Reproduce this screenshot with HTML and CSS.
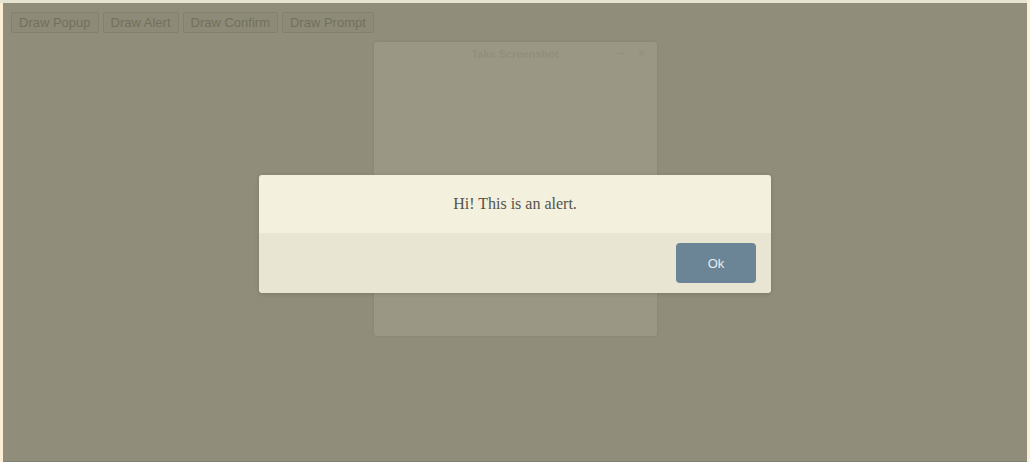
FILE: index.html
```html
<!DOCTYPE html>
<html>
<head>
<meta charset="utf-8">
<link rel="stylesheet" href="styles.css">
</head>
<body>
<div class="topbar"></div>
<div class="screen">
  <div class="toolbar">
    <button class="tool">Draw Popup</button>
    <button class="tool">Draw Alert</button>
    <button class="tool">Draw Confirm</button>
    <button class="tool">Draw Prompt</button>
  </div>
  <div class="panel">
    <div class="panel-head">
      <span class="panel-title">Take Screenshot</span>
      <span class="panel-ctrls"><span>–</span><span>×</span></span>
    </div>
  </div>
  <div class="alert">
    <div class="alert-body">Hi! This is an alert.</div>
    <div class="alert-foot"><button class="ok">Ok</button></div>
  </div>
</div>
</body>
</html>
```
FILE: styles.css
```css
html, body { margin: 0; padding: 0; }
body {
  background: #fcefd6;
  width: 1030px;
  height: 462px;
  overflow: hidden;
  font-family: "Liberation Sans", Arial, sans-serif;
}
.topbar {
  width: 1027px;
  height: 3px;
  background: #e6e3d0;
}
.screen {
  position: relative;
  margin-left: 3px;
  width: 1024px;
  height: 458px;
  background: #908e7a;
  border-bottom: 1px solid #83816f;
}
.toolbar {
  display: flex;
  gap: 4px;
  padding: 9px 0 0 8px;
}
.tool {
  height: 21px;
  padding: 0 7px;
  background: #8d8b77;
  border: 1px solid #83816e;
  border-radius: 2px;
  color: #72705d;
  font-family: "Liberation Sans", Arial, sans-serif;
  font-size: 13px;
}
.panel {
  margin: 9px auto 0;
  width: 283px;
  height: 294px;
  background: #9a9884;
  border-radius: 3px;
  box-shadow: 0 0 3px rgba(0,0,0,0.08);
}
.panel-head {
  position: relative;
  height: 22px;
  display: flex;
  justify-content: center;
  align-items: center;
}
.panel-title {
  font-size: 11px;
  font-weight: bold;
  color: #918f7b;
  padding-top: 1px;
}
.panel-ctrls {
  position: absolute;
  right: 11px;
  top: 3px;
  display: flex;
  gap: 13px;
  font-size: 13px;
  color: #918f7b;
}
.alert {
  position: absolute;
  left: 256px;
  top: 172px;
  width: 512px;
  height: 118px;
  border-radius: 3px;
  overflow: hidden;
  box-shadow: 0 1px 4px rgba(0,0,0,0.15);
  display: flex;
  flex-direction: column;
}
.alert-body {
  height: 58px;
  background: #f3f0dd;
  display: flex;
  align-items: center;
  justify-content: center;
  font-family: "Liberation Serif", "Times New Roman", serif;
  font-size: 16px;
  color: #55534a;
}
.alert-foot {
  flex: 1;
  background: #e8e5d3;
  display: flex;
  justify-content: flex-end;
  align-items: flex-start;
  padding: 10px 15px 0 0;
}
.ok {
  width: 80px;
  height: 40px;
  background: #6b8596;
  border: none;
  border-radius: 4px;
  color: #e9ecec;
  font-family: "Liberation Sans", Arial, sans-serif;
  font-size: 13px;
}
```
